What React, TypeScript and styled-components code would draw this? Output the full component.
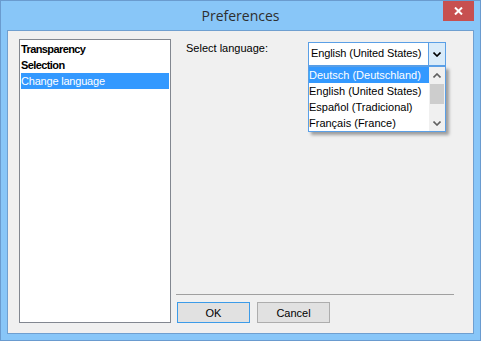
import React from "react";
import styled, { createGlobalStyle } from "styled-components";

const listItems = [
  { label: "Transparency", bold: true },
  { label: "Selection", bold: true },
  { label: "Change language", selected: true },
];

const languages = [
  "Deutsch (Deutschland)",
  "English (United States)",
  "Español (Tradicional)",
  "Français (France)",
];

function Chevron({ up, color = "#000" }: { up?: boolean; color?: string }) {
  return (
    <svg width="8" height="5" viewBox="0 0 8 5">
      <path
        d={up ? "M0.5 4.5 L4 1 L7.5 4.5" : "M0.5 0.5 L4 4 L7.5 0.5"}
        fill="none"
        stroke={color}
        strokeWidth="1.6"
      />
    </svg>
  );
}

export default function App() {
  return (
    <>
      <GlobalStyle />
      <Window>
        <TitleBar>
          Preferences
          <CloseButton>
            <svg width="9" height="8" viewBox="0 0 9 8">
              <path d="M1 0.5 L8 7.5 M8 0.5 L1 7.5" stroke="#fff" strokeWidth="2" />
            </svg>
          </CloseButton>
        </TitleBar>
        <Client>
          <ListBox>
            {listItems.map((item) => (
              <ListItem key={item.label} $bold={item.bold} $selected={item.selected}>
                {item.label}
              </ListItem>
            ))}
          </ListBox>
          <RightPane>
            <LangRow>
              <Label>Select language:</Label>
              <ComboWrap>
                <Combo>
                  <ComboText>English (United States)</ComboText>
                  <ComboButton>
                    <Chevron />
                  </ComboButton>
                </Combo>
                <DropList>
                  <DropItems>
                    {languages.map((lang, i) => (
                      <DropItem key={lang} $selected={i === 0}>
                        {lang}
                      </DropItem>
                    ))}
                  </DropItems>
                  <ScrollBar>
                    <ScrollArrow>
                      <Chevron up color="#606060" />
                    </ScrollArrow>
                    <ScrollThumb />
                    <ScrollTrack />
                    <ScrollArrow>
                      <Chevron color="#606060" />
                    </ScrollArrow>
                  </ScrollBar>
                </DropList>
              </ComboWrap>
            </LangRow>
            <Separator />
            <ButtonRow>
              <Button $default>OK</Button>
              <Button>Cancel</Button>
            </ButtonRow>
          </RightPane>
        </Client>
      </Window>
    </>
  );
}

const GlobalStyle = createGlobalStyle`
  html, body {
    margin: 0;
    padding: 0;
    background: #88c6f8;
  }
  body {
    font-family: "Liberation Sans", Arial, sans-serif;
    font-size: 11px;
    color: #000;
  }
`;

const Window = styled.div`
  width: 481px;
  height: 341px;
  box-sizing: border-box;
  border: 1px solid #6a9bcf;
  background: #88c6f8;
  display: flex;
  flex-direction: column;
`;

const TitleBar = styled.div`
  height: 29px;
  position: relative;
  display: flex;
  align-items: center;
  justify-content: center;
  font-family: "Open Sans", "Noto Sans", sans-serif;
  font-size: 14px;
  color: #2e2e2e;
`;

const CloseButton = styled.div`
  position: absolute;
  top: 0;
  right: 6px;
  width: 31px;
  height: 20px;
  background: #c75050;
  display: flex;
  align-items: center;
  justify-content: center;
`;

const Client = styled.div`
  flex: 1;
  margin: 0 6px 6px;
  border: 1px solid #6f9fd0;
  background: #f0f0f0;
  display: flex;
  padding: 8px 19px 10px 11px;
`;

const ListBox = styled.div`
  width: 152px;
  box-sizing: border-box;
  border: 1px solid #828790;
  background: #fff;
  padding: 1px;
`;

const ListItem = styled.div<{ $bold?: boolean; $selected?: boolean }>`
  height: 16px;
  line-height: 16px;
  white-space: nowrap;
  font-weight: ${(p) => (p.$bold ? "bold" : "normal")};
  letter-spacing: ${(p) => (p.$bold ? "-0.6px" : "-0.2px")};
  background: ${(p) => (p.$selected ? "#3399ff" : "transparent")};
  color: ${(p) => (p.$selected ? "#fff" : "#000")};
`;

const RightPane = styled.div`
  flex: 1;
  margin-left: 5px;
  padding-top: 3px;
  display: flex;
  flex-direction: column;
`;

const LangRow = styled.div`
  display: flex;
  align-items: flex-start;
  flex: 1;
`;

const Label = styled.div`
  padding-left: 10px;
  line-height: 13px;
`;

const ComboWrap = styled.div`
  margin-left: auto;
  margin-right: 8px;
  width: 138px;
  position: relative;
`;

const Combo = styled.div`
  height: 24px;
  box-sizing: border-box;
  border: 1px solid #5a9fe6;
  display: flex;
`;

const ComboText = styled.div`
  flex: 1;
  background: #fff;
  padding-left: 2px;
  line-height: 21px;
  white-space: nowrap;
  letter-spacing: -0.1px;
`;

const ComboButton = styled.div`
  width: 16px;
  background: #d9ebf9;
  border-left: 1px solid #5a9fe6;
  display: flex;
  align-items: center;
  justify-content: center;
`;

const DropList = styled.div`
  position: absolute;
  top: 24px;
  left: 0;
  width: 138px;
  height: 66px;
  box-sizing: border-box;
  border: 1px solid #5a9fe6;
  background: #fff;
  box-shadow: 3px 3px 3px rgba(0, 0, 0, 0.35);
  display: flex;
  z-index: 2;
`;

const DropItems = styled.div`
  flex: 1;
`;

const DropItem = styled.div<{ $selected?: boolean }>`
  height: 16px;
  line-height: 16px;
  white-space: nowrap;
  background: ${(p) => (p.$selected ? "#3399ff" : "transparent")};
  color: ${(p) => (p.$selected ? "#fff" : "#000")};
`;

const ScrollBar = styled.div`
  width: 16px;
  background: #f0f0f0;
  display: flex;
  flex-direction: column;
`;

const ScrollArrow = styled.div`
  height: 16px;
  display: flex;
  align-items: center;
  justify-content: center;
`;

const ScrollThumb = styled.div`
  height: 20px;
  margin: 1px 1px 0;
  background: #cdcdcd;
`;

const ScrollTrack = styled.div`
  flex: 1;
`;

const Separator = styled.div`
  border-top: 1px solid #a0a0a0;
  margin-bottom: 7px;
`;

const ButtonRow = styled.div`
  display: flex;
  gap: 7px;
  margin-left: 1px;
`;

const Button = styled.div<{ $default?: boolean }>`
  width: 73px;
  height: 21px;
  box-sizing: border-box;
  border: 1px solid ${(p) => (p.$default ? "#3c9be8" : "#adadad")};
  background: #e1e1e1;
  display: flex;
  align-items: center;
  justify-content: center;
`;
